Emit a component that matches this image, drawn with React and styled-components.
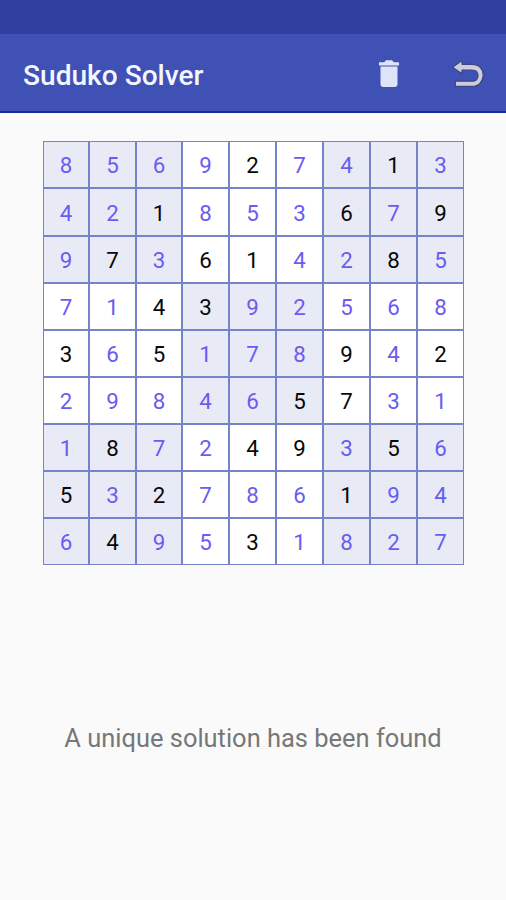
import React from "react";
import styled, { createGlobalStyle } from "styled-components";

const GlobalStyle = createGlobalStyle`
  body { margin: 0; background: #fafafa; }
`;

const Screen = styled.div`
  width: 506px;
  height: 900px;
  display: flex;
  flex-direction: column;
  align-items: center;
  overflow: hidden;
  background: #fafafa;
  font-family: Roboto, sans-serif;
`;

const StatusBar = styled.div`
  width: 100%;
  height: 34px;
  flex: none;
  background: #303f9f;
`;

const AppBar = styled.header`
  width: 100%;
  height: 79px;
  flex: none;
  box-sizing: border-box;
  display: flex;
  align-items: center;
  padding: 3px 21px 0 23px;
  background: #3f51b5;
  border-bottom: 2px solid #132b9b;
`;

const Title = styled.h1`
  flex: 1;
  margin: 0;
  padding-top: 3px;
  font-size: 28.1px;
  line-height: 32px;
  font-weight: 500;
  color: #f4f6ff;
  white-space: nowrap;
`;

const IconButton = styled.button`
  display: flex;
  padding: 0;
  border: 0;
  background: none;
  margin-left: ${(p) => p.$gap || 0}px;
`;

const Board = styled.main`
  flex: none;
  margin-top: 28px;
  display: grid;
  grid-template-columns: 46px 47px 46px repeat(6, 47px);
  grid-template-rows: 47px 48px repeat(7, 47px);
`;

const Cell = styled.div`
  box-sizing: border-box;
  display: flex;
  align-items: center;
  justify-content: center;
  padding-top: 1px;
  padding-left: 1px;
  border: 1px solid #7584c6;
  background: ${(p) => (p.$shaded ? "#e8eaf6" : "#ffffff")};
  color: ${(p) => (p.$given ? "#080808" : "#6a5cf0")};
  font-size: 22.3px;
  line-height: 26px;
`;

const Message = styled.p`
  margin: 157px 0 0;
  font-size: 25.45px;
  line-height: 32px;
  color: #777777;
  white-space: nowrap;
`;

const ROWS = [
  "856927413",
  "421853679",
  "973614285",
  "714392568",
  "365178942",
  "298465731",
  "187249356",
  "532786194",
  "649531827",
];

// "x" marks a digit entered by the player; the others come from the solver.
const GIVEN = [
  "....x..x.",
  "..x...x.x",
  ".x.xx..x.",
  "..xx.....",
  "x.x...x.x",
  ".....xx..",
  ".x..xx.x.",
  "x.x...x..",
  ".x..x....",
];

const isShaded = (r, c) => (Math.floor(r / 3) + Math.floor(c / 3)) % 2 === 0;

const TrashIcon = () => (
  <svg width="24" height="30" viewBox="0 0 24 30" fill="#dfe3f8">
    <path d="M2 3.2h5.2L9 1.3h6l1.8 1.9H22v3.2H2z" />
    <path d="M3.5 7.4h17v17.7a3 3 0 0 1-3 3h-11a3 3 0 0 1-3-3z" />
  </svg>
);

const UndoIcon = () => (
  <svg width="34" height="32" viewBox="0 0 34 32" strokeLinejoin="round">
    <path
      d="M1.5 9.2L11 2.6V6.3H21C28 6.3 32.2 10.7 32.2 17S27.8 28.4 21 28.4H4.3V23.2H20.8C24.7 23.2 27 20.8 27 17.4S24.7 12 20.8 12H11V15.7Z"
      fill="#cbcddd"
      stroke="#3c457f"
      strokeWidth="1.2"
    />
  </svg>
);

export default function App() {
  return (
    <Screen>
      <GlobalStyle />
      <StatusBar />
      <AppBar>
        <Title>Suduko Solver</Title>
        <IconButton aria-label="Clear">
          <TrashIcon />
        </IconButton>
        <IconButton aria-label="Undo" $gap={50}>
          <UndoIcon />
        </IconButton>
      </AppBar>
      <Board>
        {ROWS.map((row, r) =>
          [...row].map((digit, c) => (
            <Cell key={`${r}-${c}`} $shaded={isShaded(r, c)} $given={GIVEN[r][c] === "x"}>
              {digit}
            </Cell>
          ))
        )}
      </Board>
      <Message>A unique solution has been found</Message>
    </Screen>
  );
}
